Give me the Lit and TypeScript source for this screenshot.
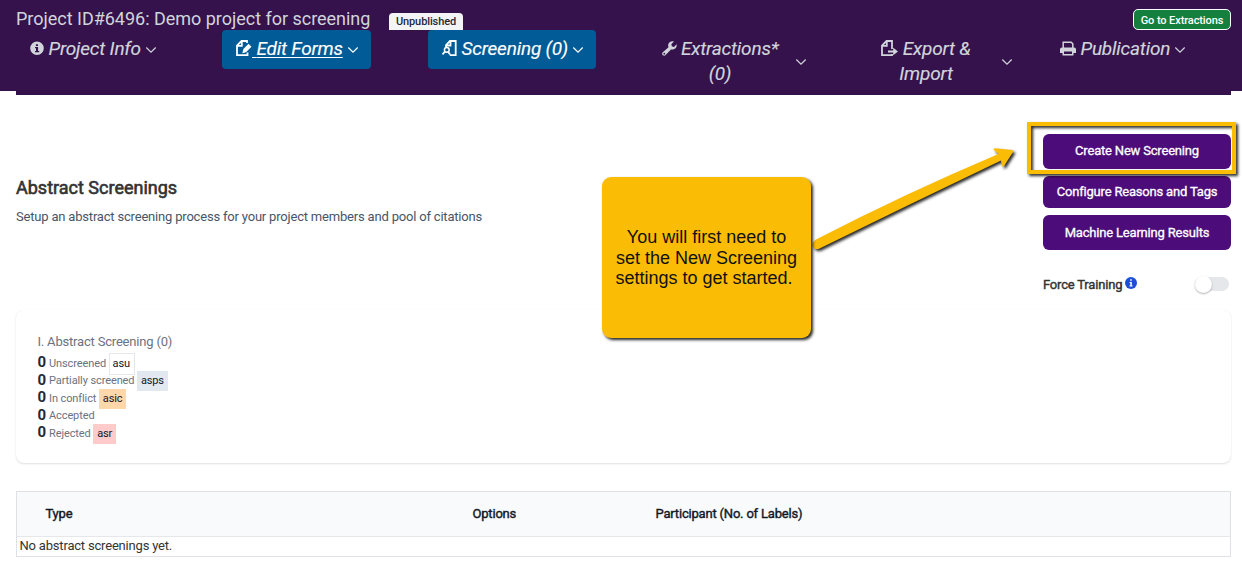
import { LitElement, html, css, svg, TemplateResult } from "lit";
import { customElement } from "lit/decorators.js";

interface NavItem {
  key: string;
  icon: TemplateResult;
  width: number;
  label: string;
  kind: string;
}

const icons = {
  info: svg`<path fill="currentColor" fill-rule="evenodd" d="M7 1.500a6.800 6.800 0 1 1 0 13.600a6.800 6.800 0 1 1 0-13.600zM5.900 4.200v1.900h2.100v-1.900zM5 7v1.200h1v2.800h-1v1.200h4.200v-1.200h-1.100v-4z"/>`,
  edit: svg`<path fill="none" stroke="currentColor" stroke-width="1.800" d="M11.500 12.500V15.200H1V5.500L5.500 1H11V3M5.800 1.200V5.800H1.200"/><path fill="currentColor" d="M12.500 3.700L15.500 6.700 10 12.200 6.300 13.300 7.400 9z"/>`,
  screen: svg`<path fill="none" stroke="currentColor" stroke-width="1.800" d="M4 7V5.200L8 1H13.700V15.200H7.800M8.500 1V5.500H4"/><circle cx="4.800" cy="9.800" r="2.400" fill="none" stroke="currentColor" stroke-width="1.500"/><path fill="none" stroke="currentColor" stroke-width="1.800" d="M3 11.500L.5 14.300M6 11.600L8 14.600"/>`,
  wrench: svg`<path fill="currentColor" d="M14.600 4.300L12 6.900 9.900 6.300 9.300 4.200 11.900 1.600C9.700.800 7 2 6.300 4.300 6 5.300 6.100 6.300 6.500 7.200L.8 12.200C-.2 13.300 0 14.600.9 15.200 1.800 15.900 2.900 15.800 3.600 15L9 9.400C12.200 10.300 15.400 7.700 14.600 4.300zM2.300 12.800a.9.900 0 1 1 0 1.800a.9.900 0 1 1 0-1.800z"/>`,
  exporting: svg`<path fill="none" stroke="currentColor" stroke-width="1.800" d="M11 9V1H5.500L1 5.500V15.200H11V14M5.800 1V5.800H1"/><path fill="currentColor" d="M7 10.500H12.200V7.800L17 11.500 12.200 15.200V12.500H7z"/>`,
  printer: svg`<path fill="none" stroke="currentColor" stroke-width="1.500" d="M3.200 8V2.200H11.200L12.800 3.800V8"/><path fill="currentColor" fill-rule="evenodd" d="M2 7.500H14Q16 7.500 16 9.300V13H13.500V15.500H2.500V13H0V9.300Q0 7.500 2 7.500zM4 11.500V14H12V11.500z"/>`,
};

const NAV: NavItem[] = [
  { key: "info", icon: icons.info, width: 14, label: "Project Info", kind: "" },
  { key: "edit", icon: icons.edit, width: 16, label: "Edit Forms", kind: "active linked" },
  { key: "screen", icon: icons.screen, width: 15, label: "Screening (0)", kind: "active" },
  { key: "extract", icon: icons.wrench, width: 15, label: "Extractions* (0)", kind: "wrap" },
  { key: "export", icon: icons.exporting, width: 17, label: "Export & Import", kind: "wrap" },
  { key: "publish", icon: icons.printer, width: 16, label: "Publication", kind: "" },
];

const COUNTS = [
  { label: "Unscreened", tag: "asu" },
  { label: "Partially screened", tag: "asps" },
  { label: "In conflict", tag: "asic" },
  { label: "Accepted", tag: "" },
  { label: "Rejected", tag: "asr" },
];

@customElement("project-header")
class ProjectHeader extends LitElement {
  static styles = css`
    :host { display: block; height: 91px; background: #35124b; color: #d1d5db; }
    .inner { margin: 0 11px 0 16px; height: 95px; background: #35124b; }
    .top { display: flex; height: 30px; }
    .title { font-size: 18px; line-height: 38px; width: 373px; white-space: nowrap; letter-spacing: -0.02px; }
    .badge { margin-top: 13px; height: 17px; width: 74px; box-sizing: border-box; border-radius: 4px 4px 0 0; background: #f3f4f6; color: #1f2937; font-size: 11px; line-height: 17px; text-align: center; font-weight: 500; letter-spacing: -0.1px; }
    .goto { box-sizing: border-box; margin: 9px 0 0 auto; width: 98px; height: 21px; border: 1px solid #fff; border-radius: 5px; background: #15803d; color: #fff; font-size: 11px; line-height: 21px; text-align: center; font-weight: 500; letter-spacing: -0.1px; }
    .nav { display: grid; grid-template-columns: repeat(6, 186px); column-gap: 20px; align-items: start; }
    .item { display: flex; align-items: center; justify-self: start; box-sizing: border-box; padding: 6px 13px 8px 14px; border-radius: 4px; font-size: 19px; line-height: 25px; letter-spacing: -0.2px; font-style: italic; white-space: nowrap; -webkit-text-stroke: 0.150px currentColor; }
    .active { background: #005b96; color: #fff; }
    .wrap { justify-self: stretch; white-space: normal; padding-right: 14px; }
    .wrap .label { flex: 1; text-align: center; padding: 0 8px; }
    .linked .words { text-decoration: underline; text-decoration-thickness: 1px; text-underline-offset: 2px; }
    .glyph { height: 16px; vertical-align: -1px; overflow: visible; }
    .words { white-space: pre-wrap; }
    .chevron { width: 10px; height: 6px; flex: none; margin-left: 5px; margin-top: 2px; overflow: visible; }
    .wrap .chevron { margin-left: 4px; }
  `;
  render() {
    return html`<div class="inner">
      <div class="top">
        <div class="title">Project ID#6496: Demo project for screening</div>
        <div class="badge">Unpublished</div>
        <div class="goto">Go to Extractions</div>
      </div>
      <nav class="nav">
        ${NAV.map((n) => html`<a class="item ${n.kind}">
          <span class="label"><svg class="glyph" width=${n.width} height="16" viewBox="0 0 ${n.width} 16">${n.icon}</svg><span class="words"> ${n.label}</span></span>
          <svg class="chevron" viewBox="0 0 10 6"><path d="M.3.5L5 5.200 9.700.5" fill="none" stroke="currentColor" stroke-width="1.200"/></svg>
        </a>`)}
      </nav>
    </div>`;
  }
}

@customElement("screening-counts")
class ScreeningCounts extends LitElement {
  static styles = css`
    :host { display: block; box-sizing: border-box; height: 153px; padding: 22px 21.500px; border-radius: 8px; background: #fff; box-shadow: 0 1px 2px rgba(0,0,0,.12), 0 0 1px rgba(0,0,0,.06); }
    .heading { font-size: 13px; line-height: 20px; color: #6b7280; margin-bottom: 2px; letter-spacing: -0.19px; }
    .row { display: flex; align-items: center; height: 17.500px; font-size: 11px; color: #6b7280; letter-spacing: -0.1px; }
    .num { font-size: 15px; font-weight: 700; color: #1f2937; width: 11.500px; margin-top: -1px; letter-spacing: 0; }
    .text { padding-top: 1px; }
    .tag { box-sizing: border-box; margin: 2px 0 0 2.500px; padding: 0 4px; height: 20px; line-height: 20px; color: #111827; flex: none; letter-spacing: -0.15px; }
    .asu { border: 1px solid #e5e7eb; background: #fff; padding: 0 4px 0 3px; height: 22px; }
    .asps { background: #e2e8f0; }
    .asic { background: #fed7aa; }
    .asr { background: #fecaca; }
  `;
  render() {
    return html`<div class="heading">I. Abstract Screening (0)</div>
      ${COUNTS.map((c) => html`<div class="row"><span class="num">0</span><span class="text">${c.label}</span>${c.tag ? html`<span class="tag ${c.tag}">${c.tag}</span>` : ""}</div>`)}`;
  }
}

@customElement("guide-overlay")
class GuideOverlay extends LitElement {
  static styles = css`
    :host { position: absolute; inset: 0; pointer-events: none; }
    .note { position: absolute; left: 602px; top: 177px; width: 209px; height: 161px; box-sizing: border-box; padding-top: 50px; border-radius: 9px; background: #fbbc05; box-shadow: 2px 2px 3px rgba(0,0,0,.85); color: #111; font: 18px/20.500px "Liberation Sans", Arial, sans-serif; text-align: center; white-space: pre; }
    .frame { position: absolute; left: 1027px; top: 122px; width: 209px; height: 52px; box-sizing: border-box; border: 4px solid #fbbc05; filter: drop-shadow(2px 2px 1.500px rgba(0,0,0,.85)); }
    .arrow { position: absolute; left: 802px; top: 137px; filter: drop-shadow(2px 2px 1.500px rgba(0,0,0,.85)); }
  `;
  render() {
    return html`<svg class="arrow" width="222" height="125" viewBox="802 137 222 125">
        <path fill="#fbbc05" d="M815.500 239.800Q905 193.500 998.500 154L993.500 149.500Q993.500 148.200 995 148.200L1012 150Q1014 150.500 1013 152L1004 166Q1003 167.500 1002 166L1001 160.500Q910 204 819 248.800Q814 250 812.500 246Q811.500 242.500 815.500 239.800Z"/>
      </svg>
      <div class="frame"></div>
      <div class="note">You will first need to
set the New Screening
settings to get started. </div>`;
  }
}

@customElement("app-root")
class AppRoot extends LitElement {
  static styles = css`
    :host { display: block; position: relative; width: 1242px; height: 568px; overflow: hidden; background: #fff; font-family: Roboto, sans-serif; }
    .content { padding: 0 11px 0 16px; }
    .intro { display: flex; justify-content: space-between; height: 219px; }
    .heading { margin: 86px 0 0; font-size: 18px; line-height: 22px; font-weight: 400; color: #333; -webkit-text-stroke: 0.600px #333; }
    .sub { margin: 8px 0 0; font-size: 13px; line-height: 20px; color: #475569; letter-spacing: -0.19px; }
    .actions { width: 188px; padding-top: 43px; letter-spacing: -0.19px; }
    .button { height: 35px; line-height: 35px; border-radius: 6px; background: #4c0d7a; color: #fff; font-size: 13px; text-align: center; -webkit-text-stroke: 0.300px #fff; }
    .button:first-child { line-height: 34px; }
    .second { height: 32px; margin: 7px 0; line-height: 32px; }
    .training { display: flex; align-items: center; height: 20px; margin-top: 24px; font-size: 13px; color: #333; }
    .bold { -webkit-text-stroke: 0.400px currentColor; }
    .dot { margin: -3px 0 0 3px; }
    .switch { width: 34px; height: 14px; margin: 0 2px 0 auto; border-radius: 7px; background: #e5e7eb; display: flex; align-items: center; }
    .knob { width: 17px; height: 17px; flex: none; border-radius: 50%; background: #fff; box-shadow: 0 1px 2px rgba(0,0,0,.3); }
    .table { margin-top: 28px; border: 1px solid #dfe1e6; height: 66px; box-sizing: border-box; font-size: 13px; letter-spacing: -0.19px; }
    .thead { display: grid; grid-template-columns: 427px 183px 1fr; height: 44px; line-height: 44px; padding-left: 28.500px; background: #f9fafb; border-bottom: 1px solid #e5e7eb; color: #111827; }
    .empty { line-height: 18px; padding-left: 2.500px; color: #333; }
  `;
  render() {
    return html`<project-header></project-header>
      <main class="content">
        <section class="intro">
          <div>
            <h1 class="heading">Abstract Screenings</h1>
            <p class="sub">Setup an abstract screening process for your project members and pool of citations</p>
          </div>
          <div class="actions">
            <div class="button">Create New Screening</div>
            <div class="button second">Configure Reasons and Tags</div>
            <div class="button">Machine Learning Results</div>
            <div class="training"><span class="bold">Force Training</span>
              <svg class="dot" width="12" height="12" viewBox="0 0 12 12"><circle cx="6" cy="6" r="6" fill="#1d4ed8"/><path fill="#fff" d="M5.200 2.300h1.600v1.500H5.200zM4.600 5h2.200v3.500h.7v1H4.500v-1h.8V6h-.7z"/></svg>
              <span class="switch"><span class="knob"></span></span>
            </div>
          </div>
        </section>
        <screening-counts></screening-counts>
        <div class="table">
          <div class="thead bold"><span>Type</span><span>Options</span><span>Participant (No. of Labels)</span></div>
          <div class="empty">No abstract screenings yet.</div>
        </div>
      </main>
      <guide-overlay></guide-overlay>`;
  }
}
